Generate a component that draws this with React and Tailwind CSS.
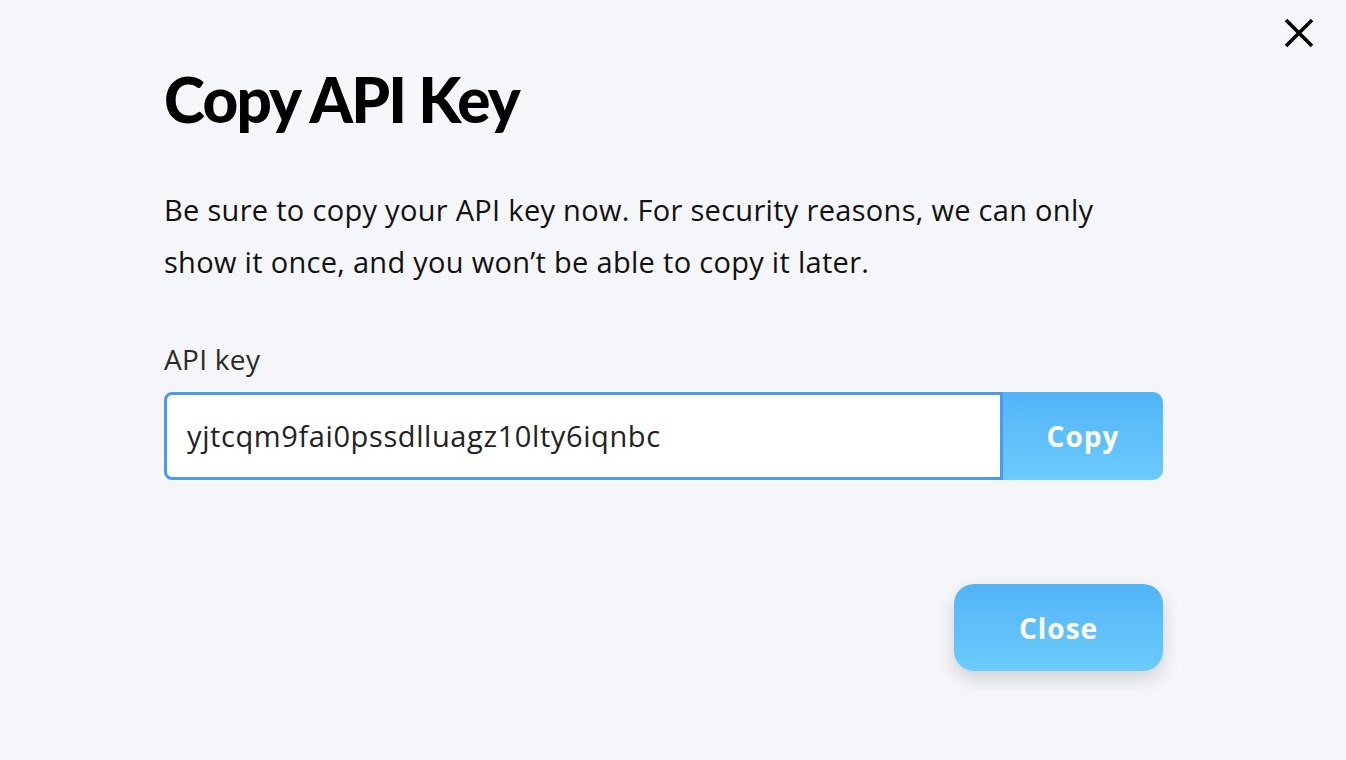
import React from "react";

export default function App() {
  return (
    <div
      className="relative min-h-[760px] w-full bg-[#f5f6fa]"
      style={{ fontFamily: "'Open Sans', Lato, sans-serif" }}
    >
      <button className="absolute right-[30px] top-[16px] flex h-[34px] w-[34px] items-center justify-center">
        <svg width="30" height="30" viewBox="0 0 30 30" fill="none">
          <path d="M2 2 L28 28 M28 2 L2 28" stroke="#000" strokeWidth="3.6" strokeLinecap="butt" />
        </svg>
      </button>
      <div className="ml-[164px] w-[999px] pt-[63px]">
        <h1
          className="text-[62px] font-black leading-[72px] tracking-[-1.8px] text-black"
          style={{ fontFamily: "Lato, sans-serif" }}
        >
          Copy API Key
        </h1>
        <p className="mt-[49px] text-[29px] leading-[52px] tracking-[0.3px] text-[#111]">
          Be sure to copy your API key now. For security reasons, we can only
          <br />
          show it once, and you won’t be able to copy it later.
        </p>
        <div className="mt-[53px] text-[28px] leading-[36px] tracking-[0.3px] text-[#2a2a2a]">API key</div>
        <div className="mt-[15px] flex h-[88px]">
          <div className="flex flex-1 items-center rounded-l-[8px] border-[3px] border-[#4a9be8] bg-white pl-[20px] text-[29px] tracking-[0.6px] text-[#222]">
            yjtcqm9fai0pssdlluagz10lty6iqnbc
          </div>
          <button className="flex w-[160px] items-center justify-center rounded-r-[10px] bg-gradient-to-b from-[#52b4f7] to-[#6bcbfb] text-[28px] font-bold tracking-[1px] text-white">
            Copy
          </button>
        </div>
        <div className="mt-[104px] flex justify-end">
          <button className="flex h-[87px] w-[209px] items-center justify-center rounded-[20px] bg-gradient-to-b from-[#52b4f7] to-[#6bcbfb] text-[28px] font-bold tracking-[1px] text-white shadow-[0_8px_18px_rgba(0,0,0,0.15)]">
            Close
          </button>
        </div>
      </div>
    </div>
  );
}
